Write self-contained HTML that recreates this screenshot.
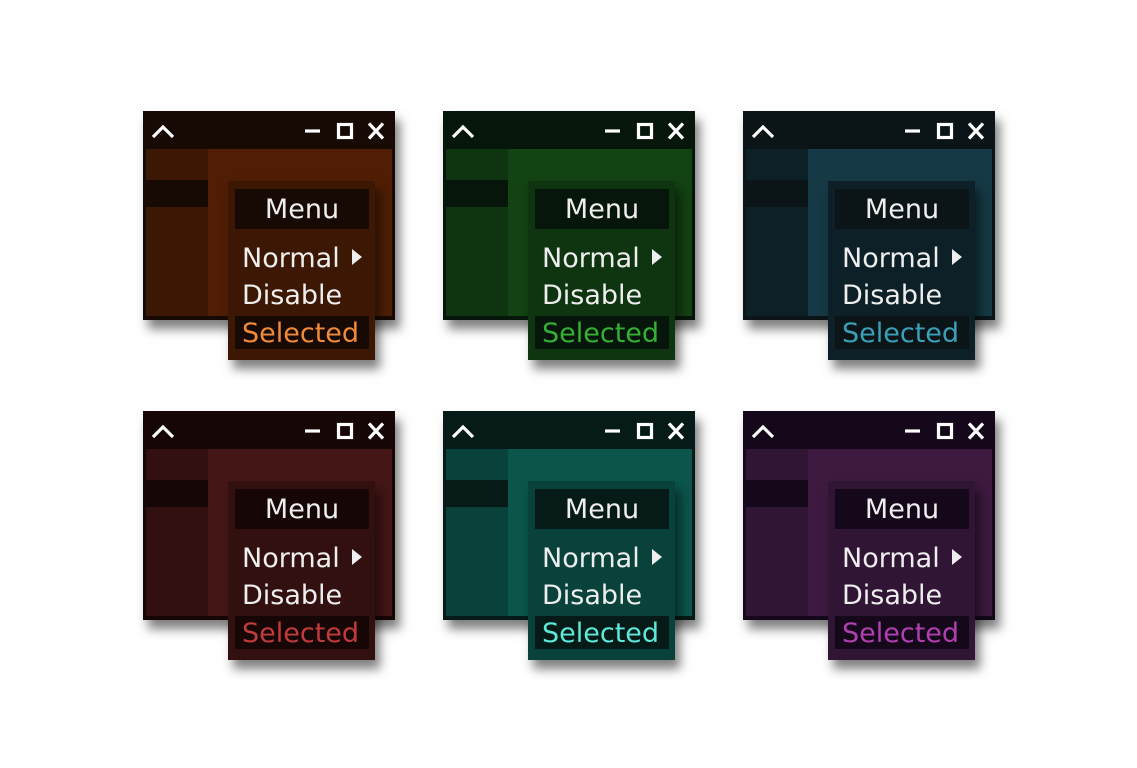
<!DOCTYPE html><html><head><style>
body{margin:0;width:1137px;height:768px;background:#fff;position:relative;overflow:hidden;font-family:"DejaVu Sans","Liberation Sans",sans-serif}
.w{position:absolute;width:252px;height:250px}
.win{position:absolute;left:0;top:0;width:252px;height:209px;background:var(--t);box-shadow:5px 9px 10px rgba(0,0,0,.5)}
.side{position:absolute;left:3px;top:38px;width:62px;height:167px;background:var(--s)}
.band{position:absolute;left:3px;top:69px;width:62px;height:27px;background:var(--t)}
.main{position:absolute;left:65px;top:38px;width:184px;height:167px;background:var(--m)}
.menu{position:absolute;left:85px;top:70px;width:147px;height:179px;background:var(--s);box-shadow:5px 9px 10px rgba(0,0,0,.5)}
.hd{position:absolute;left:7px;top:8px;width:134px;height:40px;background:var(--t);color:#eee;font-size:27px;line-height:42px;text-align:center}
.it{position:absolute;left:14px;color:#eee;font-size:27px;line-height:30px}
.sel{position:absolute;left:7px;top:135px;width:134px;height:33px;background:var(--t);color:var(--c);font-size:27px;line-height:35px;padding-left:7px;box-sizing:border-box}
.tri{position:absolute;left:124px;top:68px;width:0;height:0;border-left:10px solid #eee;border-top:8px solid transparent;border-bottom:8px solid transparent}
svg{position:absolute;left:0;top:0}
</style></head><body>
<script>
const themes=[
[143,111,'#170a04','#3c1703','#4f1e04','#f08a3a'],
[443,111,'#07160a','#0f3510','#134213','#34b034'],
[743,111,'#0b1518','#0e2027','#153a45','#3aa0b8'],
[143,411,'#170606','#331010','#451616','#c03c3c'],
[443,411,'#061a17','#09423b','#0b554b','#5ee8d8'],
[743,411,'#14081a','#311534','#3e1a40','#b040b0']];
let h='';
for(const [x,y,t,s,m,c] of themes){
h+=`<div class="w" style="left:${x}px;top:${y}px;--t:${t};--s:${s};--m:${m};--c:${c}">
<div class="win"><div class="side"></div><div class="band"></div><div class="main"></div>
<svg width="252" height="38" fill="none" stroke="#fff" stroke-width="3.2"><path d="M10 26 L20 16 L30 26"/><path d="M162 20 H177"/><rect x="195.5" y="13.5" width="13" height="13"/><path d="M226 12.5 L240 27.5 M240 12.5 L226 27.5"/></svg></div>
<div class="menu"><div class="hd">Menu</div><div class="it" style="top:63px">Normal</div><div class="tri"></div><div class="it" style="top:100px">Disable</div><div class="sel">Selected</div></div></div>`;}
document.body.insertAdjacentHTML('beforeend',h);
</script>
</body></html>
